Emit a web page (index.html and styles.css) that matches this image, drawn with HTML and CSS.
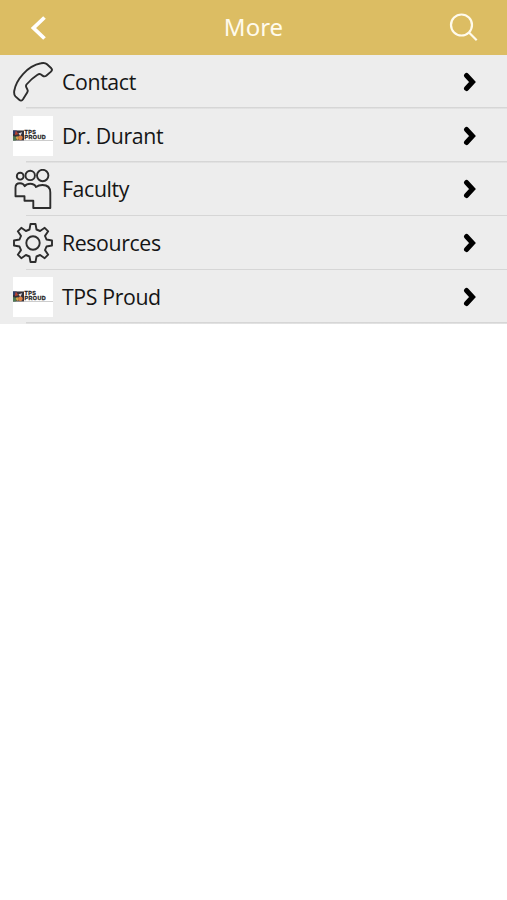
FILE: index.html
```html
<!DOCTYPE html>
<html lang="en">

<head>
    <meta charset="UTF-8">
    <meta name="viewport" content="width=device-width, initial-scale=1.0">
    <title>More</title>
    <link rel="stylesheet" href="styles.css">
</head>

<body>
    <!-- Shared shapes -->
    <svg class="defs" width="0" height="0">
        <symbol id="chevron" viewBox="0 0 14 20">
            <path d="M3.500 3.500l6 6.500-6 6.500" />
        </symbol>
        <symbol id="badge" viewBox="0 0 12 11">
            <rect width="12" height="11" fill="#343039" />
            <path d="M0 0h4v4H0z" fill="#2c3f6e" />
            <path d="M3 0l3 4-4 1z" fill="#b8412f" />
            <path d="M6 3l4-1-2 4z" fill="#ddd9df" />
            <circle cx="8" cy="8" r="2.6" fill="#dd8145" />
            <path d="M0 6l4 1-1 4H0z" fill="#4c7a53" />
            <path d="M3 7l2-1 1 4H4z" fill="#d2a94a" />
        </symbol>
    </svg>

    <header class="header">
        <svg class="back" viewBox="0 0 18 26">
            <path d="M14.5 2.5L3.5 13l11 10.5" />
        </svg>
        <h1 class="title">More</h1>
        <svg class="search" viewBox="0 0 30 30">
            <circle cx="12.5" cy="12" r="10.5" />
            <path d="M20 19.5l7.7 7.7" />
        </svg>
    </header>

    <ul class="menu">
        <li class="item">
            <svg class="icon" viewBox="0 0 40 40">
                <path d="M1.200 29C3 18 14 4 28 1.300Q32 .4 34 2.300L38.300 6.300Q39.800 8 38 9.600L33.200 13.800Q31.500 15 29.500 13.600L28 12.500Q26.500 11.500 24.500 12.700Q18.500 16.500 13.500 22.500Q12.500 24 13.500 25.700L14.400 27.500Q15.200 29 14.200 30.600L10 37.300Q8.300 39.600 6.200 37.800L2.400 34.400Q.8 32.700 1.200 29z" />
            </svg>
            <span class="label">Contact</span>
            <svg class="arrow"><use href="#chevron" /></svg>
        </li>
        <li class="item">
            <div class="logo">
                <svg class="badge"><use href="#badge" /></svg>
                <p class="logo-text">TPS<br>PROUD</p>
            </div>
            <span class="label">Dr. Durant</span>
            <svg class="arrow"><use href="#chevron" /></svg>
        </li>
        <li class="item">
            <svg class="icon" viewBox="0 0 40 40">
                <circle cx="7.200" cy="7.200" r="3.400" />
                <circle cx="17.200" cy="6.400" r="4.700" />
                <circle cx="29.700" cy="6.500" r="5.700" />
                <path d="M2.500 27.300V18.500Q2.500 14.200 7 14.200Q10.500 14.200 11.700 17.200Q13.500 14.800 17.200 14.800Q21.500 14.800 23 18Q25.500 16 29.500 16Q37.300 16 37.300 23.500V39H20.300V31.700H11.500V27.300z" />
            </svg>
            <span class="label">Faculty</span>
            <svg class="arrow"><use href="#chevron" /></svg>
        </li>
        <li class="item">
            <svg class="icon" viewBox="-20 -20 40 40">
                <circle r="6.700" />
                <path d="M-3.500-13.500L-2.500-19H2.500L3.500-13.500L7.100-12L11.700-15.200L15.200-11.700L12-7.100L13.500-3.500L19-2.500V2.500L13.500 3.500L12 7.100L15.200 11.700L11.700 15.200L7.100 12L3.500 13.500L2.500 19H-2.500L-3.500 13.500L-7.100 12L-11.700 15.200L-15.200 11.700L-12 7.100L-13.500 3.500L-19 2.500V-2.500L-13.500-3.500L-12-7.100L-15.200-11.700L-11.700-15.200L-7.100-12z" />
            </svg>
            <span class="label">Resources</span>
            <svg class="arrow"><use href="#chevron" /></svg>
        </li>
        <li class="item">
            <div class="logo">
                <svg class="badge"><use href="#badge" /></svg>
                <p class="logo-text">TPS<br>PROUD</p>
            </div>
            <span class="label">TPS Proud</span>
            <svg class="arrow"><use href="#chevron" /></svg>
        </li>
    </ul>
</body>

</html>
```

FILE: styles.css
```css
* {
    padding: 0;
    margin: 0;
    box-sizing: border-box;
    font-family: "Noto Sans", "Open Sans", sans-serif;
}

body {
    background-color: #fff;
}

svg {
    fill: none;
    flex-shrink: 0;
}

.defs {
    position: absolute;
}

.header {
    height: 55px;
    padding: 0 28px 0 30px;
    display: flex;
    align-items: center;
    justify-content: space-between;
    background-color: #dcbd63;
}

.back {
    width: 18px;
    height: 26px;
    stroke: #fff;
    stroke-width: 3.8;
}

.title {
    font-size: 24px;
    font-weight: 400;
    line-height: 52px;
    padding-bottom: 2px;
    color: #fffbed;
    margin-left: 10px;
}

.search {
    width: 30px;
    height: 30px;
    stroke: #fffbed;
    stroke-width: 2.2;
}

.menu {
    list-style: none;
    background-color: #ededed;
}

.item {
    height: 53.75px;
    padding: 0 30.5px 0 12.5px;
    display: flex;
    align-items: center;
    /* separator starts indented from the left edge */
    background: linear-gradient(#d6d6d6, #d6d6d6) 26px 100% / 100% 1.5px no-repeat;
}

.icon {
    width: 40px;
    height: 40px;
    stroke: #2d2d2d;
    stroke-width: 1.9;
    stroke-linejoin: round;
}

.label {
    flex: 1;
    margin-left: 9.5px;
    font-family: "Open Sans", "Noto Sans", sans-serif;
    font-size: 21.3px;
    line-height: 52px;
    letter-spacing: -0.38px;
    color: #151515;
}

.arrow {
    width: 14px;
    height: 20px;
    stroke: #000;
    stroke-width: 5;
    stroke-linecap: round;
}

.logo {
    width: 40px;
    height: 40px;
    display: flex;
    align-items: center;
    background-color: #fff;
}

.badge {
    width: 11px;
    height: 11px;
}

.logo-text {
    width: 29px;
    padding-left: 1px;
    border-bottom: 1px solid #ccc;
    font-family: "Liberation Sans", sans-serif;
    font-size: 5.4px;
    font-weight: 700;
    line-height: 5px;
    letter-spacing: 0.4px;
    -webkit-text-stroke: 0.3px #242424;
    color: #242424;
}
```
